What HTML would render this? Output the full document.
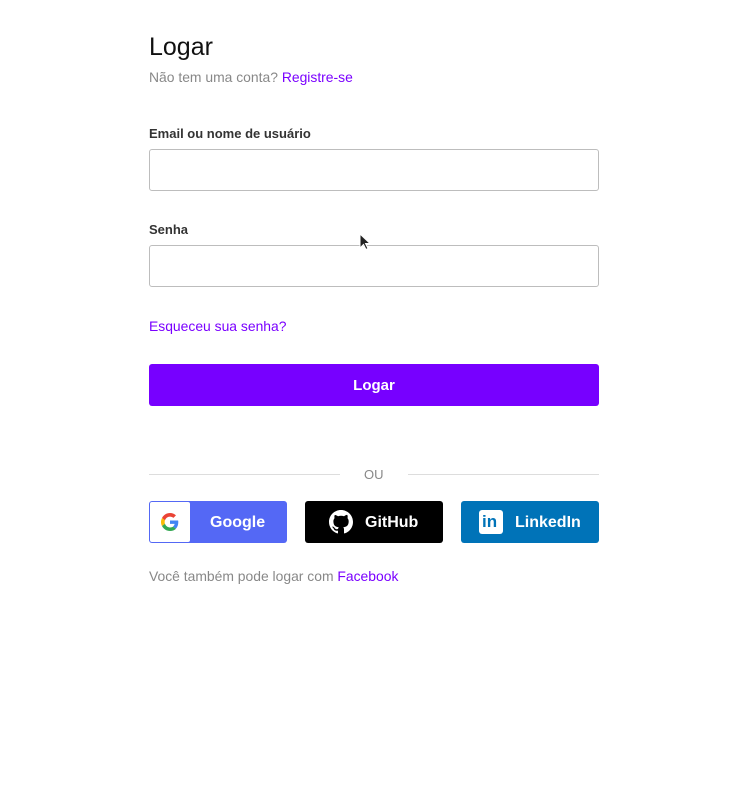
<!DOCTYPE html>
<html><head><meta charset="utf-8"><style>
*{box-sizing:border-box;margin:0;padding:0}
body{width:748px;height:790px;background:#fff;font-family:"Liberation Sans",sans-serif;position:relative;overflow:hidden}
.a{position:absolute;white-space:nowrap}
.p{color:#7a00ff}
.g{color:#888}
.in{position:absolute;left:149px;width:450px;height:42px;border:1px solid #bdbdbd;border-radius:3px}
.lbl{font-size:13px;font-weight:bold;color:#333}
.btn{position:absolute;top:501px;width:138px;height:42px;border-radius:3px;color:#fff;font-weight:bold;font-size:16px}
</style></head><body>
<div class="a" style="left:149px;top:33px;font-size:25px;color:#111">Logar</div>
<div class="a g" style="left:149px;top:69px;font-size:13.9px">Não tem uma conta? <span class="p">Registre-se</span></div>
<div class="a lbl" style="left:149px;top:126px">Email ou nome de usuário</div>
<div class="in" style="top:149px"></div>
<div class="a lbl" style="left:149px;top:222px">Senha</div>
<div class="in" style="top:245px"></div>
<div class="a p" style="left:149px;top:318px;font-size:13.9px">Esqueceu sua senha?</div>
<div class="a" style="left:149px;top:364px;width:450px;height:42px;background:#7700ff;border-radius:3px;color:#fff;font-weight:bold;font-size:15px;text-align:center;line-height:43px">Logar</div>
<div class="a" style="left:149px;top:474px;width:191px;height:1px;background:#ddd"></div>
<div class="a" style="left:408px;top:474px;width:191px;height:1px;background:#ddd"></div>
<div class="a g" style="left:364px;top:467px;font-size:13px">OU</div>
<div class="btn" style="left:149px;background:#5468f5">
 <div style="position:absolute;left:1px;top:1px;width:40px;height:40px;background:#fff;border-radius:2px"></div>
 <svg style="position:absolute;left:12px;top:12px" width="18" height="18" viewBox="0 0 48 48"><path fill="#EA4335" d="M24 9.5c3.5 0 6.6 1.2 9.1 3.6l6.8-6.8C35.8 2.4 30.3 0 24 0 14.6 0 6.6 5.4 2.7 13.3l7.9 6.2C12.5 13.700 17.8 9.5 24 9.5z"/><path fill="#4285F4" d="M46.1 24.6c0-1.6-.1-3.1-.4-4.6H24v9h12.4c-.5 2.9-2.2 5.3-4.6 6.9l7.7 6c4.5-4.2 6.6-10.3 6.6-17.3z"/><path fill="#FBBC05" d="M10.5 28.6c-.5-1.4-.8-3-.8-4.6s.3-3.2.8-4.6l-7.9-6.2C1 16.6 0 20.2 0 24s.9 7.4 2.6 10.7l7.9-6.1z"/><path fill="#34A853" d="M24 48c6.5 0 11.9-2.1 15.9-5.8l-7.7-6c-2.2 1.5-5 2.3-8.2 2.3-6.2 0-11.5-4.2-13.4-9.9l-7.9 6.1C6.6 42.6 14.6 48 24 48z"/></svg>
 <div class="a" style="left:61px;top:13px">Google</div>
</div>
<div class="btn" style="left:305px;background:#000">
 <svg style="position:absolute;left:24px;top:9px" width="24" height="24" viewBox="0 0 16 16"><path fill="#fff" d="M8 0C3.58 0 0 3.58 0 8c0 3.54 2.29 6.53 5.470 7.590.4.07.55-.17.55-.38 0-.19-.01-.82-.01-1.49-2.01.37-2.53-.49-2.69-.94-.09-.23-.48-.94-.82-1.130-.28-.15-.68-.52-.01-.53.63-.01 1.08.58 1.23.82.72 1.21 1.87.87 2.33.66.07-.52.28-.87.51-1.07-1.78-.2-3.64-.89-3.64-3.95 0-.87.31-1.59.82-2.15-.08-.2-.36-1.02.08-2.12 0 0 .67-.21 2.2.82.64-.18 1.32-.27 2-.27.68 0 1.36.09 2 .27 1.53-1.04 2.2-.82 2.2-.82.44 1.1.16 1.92.08 2.12.51.56.82 1.27.82 2.15 0 3.07-1.87 3.75-3.65 3.95.29.25.54.73.54 1.48 0 1.07-.01 1.93-.01 2.2 0 .21.15.46.55.38A8.013 8.013 0 0016 8c0-4.42-3.58-8-8-8z"/></svg>
 <div class="a" style="left:60px;top:13px">GitHub</div>
</div>
<div class="btn" style="left:461px;background:#0073b8">
 <div style="position:absolute;left:18px;top:9px;width:24px;height:24px;background:#fff;border-radius:3px"></div>
 <div class="a" style="left:21px;top:11px;color:#0073b8;font-size:17px;font-weight:bold">in</div>
 <div class="a" style="left:54px;top:13px">LinkedIn</div>
</div>
<div class="a g" style="left:149px;top:568px;font-size:13.9px">Você também pode logar com <span class="p">Facebook</span></div>
<svg class="a" style="left:359px;top:233px" width="12" height="18" viewBox="0 0 12 18"><path d="M1 1v14l3.5-3.5 2.5 5 2-1-2.5-5H11z" fill="#222" stroke="#fff" stroke-width="1"/></svg>
</body></html>
